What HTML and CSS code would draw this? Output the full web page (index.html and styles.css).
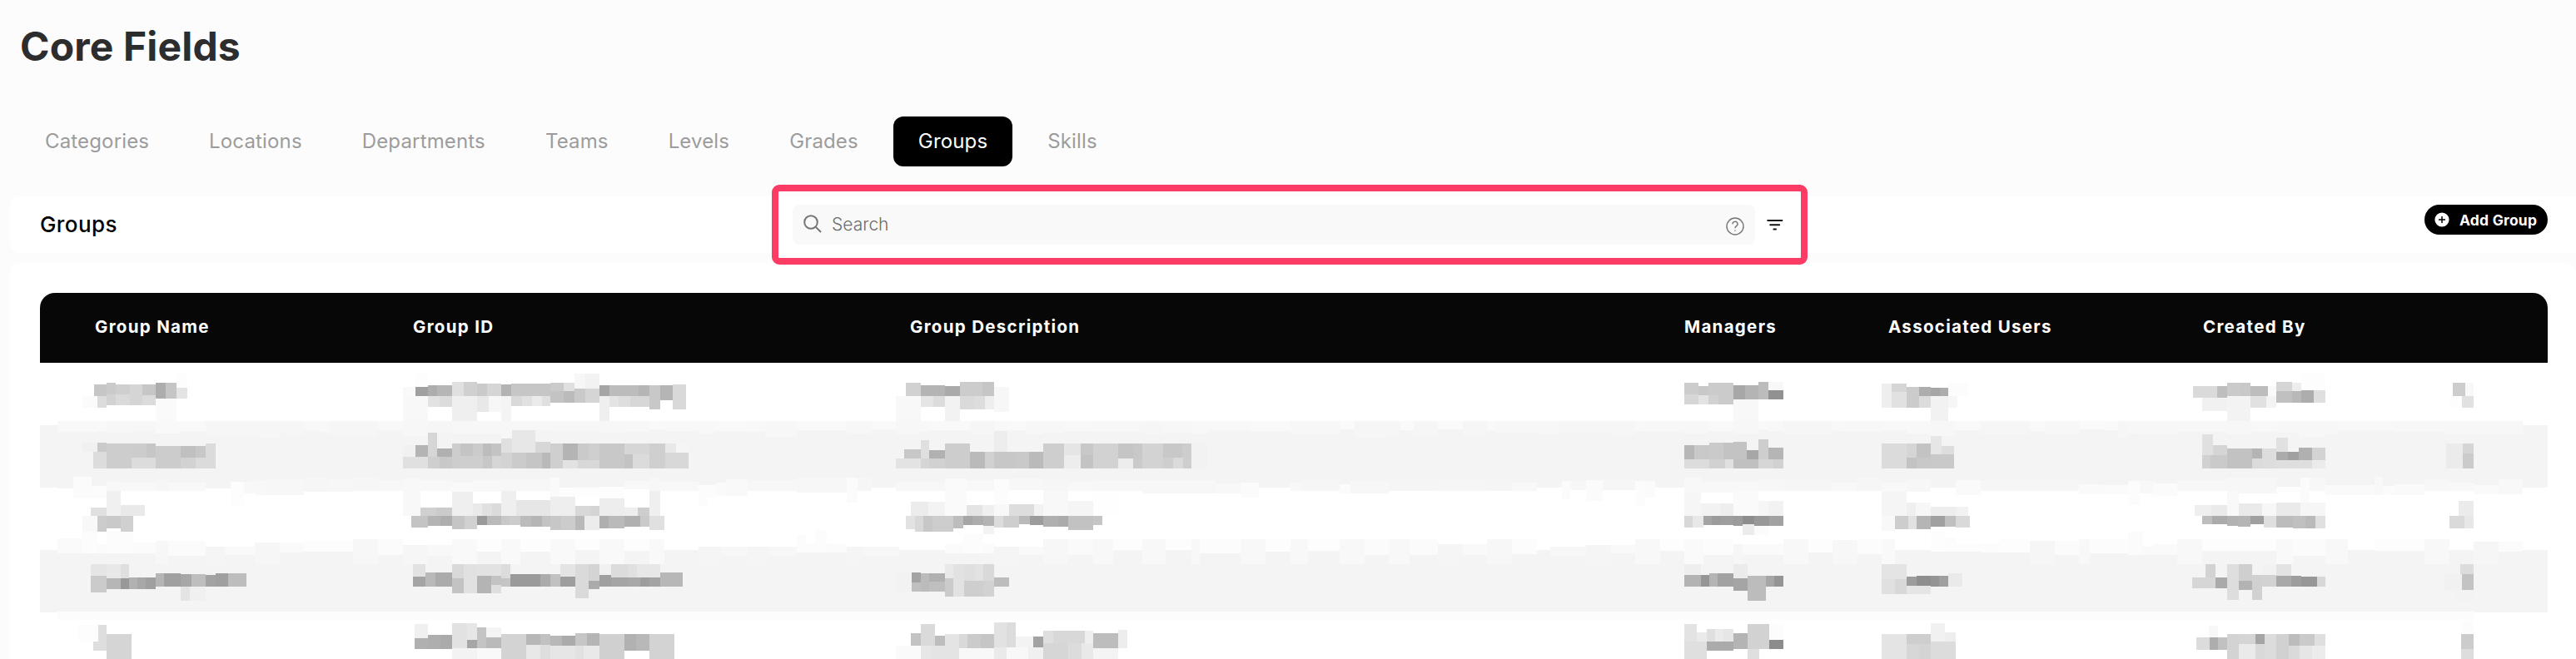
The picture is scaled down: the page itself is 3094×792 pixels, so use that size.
FILE: index.html
```html
<!DOCTYPE html>
<html lang="en">
    <head>
        <meta charset="UTF-8">
        <title>Core Fields - Groups</title>
        <link rel="stylesheet" href="styles.css">
    </head>
    <body>
        <h1>Core Fields</h1>

        <nav class="tabs">
            <a class="tab">Categories</a>
            <a class="tab">Locations</a>
            <a class="tab">Departments</a>
            <a class="tab">Teams</a>
            <a class="tab">Levels</a>
            <a class="tab">Grades</a>
            <a class="tab active">Groups</a>
            <a class="tab">Skills</a>
        </nav>

        <section class="toolbar">
            <h2>Groups</h2>
            <div class="search-area">
                <div class="search">
                    <svg class="search-icon" width="22" height="22" viewBox="0 0 22 22">
                        <circle cx="9" cy="9" r="7.8" />
                        <path d="M14.6 14.6L21 21" />
                    </svg>
                    <span class="search-text">Search</span>
                    <svg class="help-icon" width="22" height="22" viewBox="0 0 22 22">
                        <circle cx="11" cy="11" r="10" />
                        <path d="M8 8.3a3 2.9 0 1 1 4.6 2.3c-1 .7-1.6 1.2-1.6 2.6" />
                        <path d="M11 15.4v1.4" />
                    </svg>
                </div>
                <svg class="filter-icon" width="20" height="14" viewBox="0 0 20 14">
                    <path d="M1.2 2h17.2M4.2 7.3h11M8.4 12.5h2.6" />
                </svg>
            </div>
            <button class="add-group">
                <svg width="18" height="18" viewBox="0 0 18 18">
                    <circle cx="9" cy="9" r="8.6" fill="#fff" />
                    <path d="M9 5v8M5 9h8" stroke="#000" stroke-width="1.5" />
                </svg>
                Add Group
            </button>
        </section>

        <section class="card">
            <div class="grid head">
                <span class="name">Group Name</span>
                <span class="gid">Group ID</span>
                <span class="desc">Group Description</span>
                <span class="managers">Managers</span>
                <span class="users">Associated Users</span>
                <span class="created">Created By</span>
                <span></span>
            </div>
            <div class="body" id="rows">
                <svg class="edges" id="edges" viewBox="0 288 9036 1068" preserveAspectRatio="none"></svg>
            </div>
        </section>

        <script src="script.js"></script>
    </body>
</html>
```
FILE: styles.css
```css
* {
    box-sizing: border-box;
}
html {
    height: 792px;
    overflow: hidden;
}
body {
    margin: 0;
    height: 792px;
    padding-left: 12px;
    overflow: hidden;
    background: #fcfcfc;
    font-family: Inter, "Liberation Sans", sans-serif;
}
h1 {
    margin: 0;
    padding: 26px 0 0 12px;
    height: 140px;
    font-size: 48px;
    line-height: 60px;
    font-weight: 700;
    letter-spacing: 0.15px;
    color: #2d2d2d;
}
.tabs {
    display: flex;
    gap: 12px;
    height: 60px;
    margin-left: 12px;
}
.tab {
    padding: 0 30px;
    line-height: 59px;
    font-size: 24px;
    font-weight: 400;
    letter-spacing: 0.15px;
    color: #9c9c9c;
    border-radius: 12px;
}
.tab.active {
    background: #000;
    color: #fff;
}
.toolbar {
    display: grid;
    grid-template-columns: 879px 1244px 1fr;
    height: 68px;
    margin-top: 36px;
    padding: 0 34px 0 36px;
    background: #fff;
    border-radius: 12px 0 0 12px;
}
h2 {
    margin: 0;
    font-size: 26px;
    line-height: 67px;
    font-weight: 500;
    letter-spacing: 0.4px;
    color: #000;
}
.search-area {
    display: flex;
    align-items: center;
    height: 96px;
    margin-top: -14px;
    padding: 0 21px 0 17px;
    border: 8px solid #fc3c64;
    border-radius: 9px;
}
.search {
    display: flex;
    align-items: center;
    width: 1156px;
    height: 48px;
    padding: 0 13px;
    background: #f9f9f9;
    border-radius: 8px;
}
.search-text {
    flex: 1;
    margin: 0 0 2px 12px;
    font-size: 21px;
    font-weight: 300;
    color: #6c6c6c;
}
.search-icon,
.help-icon,
.filter-icon {
    flex: none;
    fill: none;
    stroke: #757575;
    stroke-width: 2;
}
.search-icon {
    margin-bottom: 2px;
}
.help-icon {
    stroke-width: 1.4;
    margin-top: 3px;
}
.filter-icon {
    margin-left: 14px;
    margin-bottom: 1px;
    stroke: #111;
    stroke-linecap: round;
}
.add-group {
    display: flex;
    align-items: center;
    justify-self: end;
    gap: 12px;
    width: 148px;
    height: 36px;
    margin-top: 10px;
    padding: 0 0 0 12px;
    border: 0;
    border-radius: 18px;
    background: #000;
    color: #fff;
    font-family: inherit;
    font-size: 17.5px;
    font-weight: 700;
    letter-spacing: 0.2px;
    white-space: nowrap;
}
.card {
    height: 476px;
    margin-top: 12px;
    padding: 36px 34px 0 36px;
    overflow: hidden;
    background: #fff;
    border-radius: 12px 12px 0 0;
}
.grid {
    display: grid;
    grid-template-columns: 412px 580px 940px 240px 340px 340px 160px;
}
.head {
    height: 84px;
    line-height: 82px;
    background: #070707;
    color: #fff;
    border-radius: 18px 18px 0 0;
    font-size: 20.5px;
    font-weight: 700;
    letter-spacing: 1.3px;
    white-space: nowrap;
}
.head .name {
    padding-left: 66px;
}
.head .gid {
    padding-left: 36px;
}
.head .desc {
    padding-left: 53px;
}
.head .managers {
    padding-left: 43px;
}
.head .users {
    padding-left: 48px;
}
.head .created {
    padding-left: 86px;
}
.body {
    position: relative;
}
.row {
    height: 75px;
}
.row:nth-of-type(even) {
    background: #f4f4f4;
}
/* softened row borders, drawn over the stripes and under the cell blocks */
.edges {
    position: absolute;
    left: 0;
    top: 0;
    width: 3012px;
    height: 356px;
    filter: brightness(0.996);
}
.cell {
    position: relative;
    width: 100%;
    height: 75px;
    overflow: visible;
    shape-rendering: crispEdges;
}
```
FILE: script.js
```js
const SVG = "http://www.w3.org/2000/svg";

// viewBox start and width of each column
const columns = [
    [144, 1236],
    [0, 1740],
    [0, 2820],
    [0, 720],
    [720, 1020],
    [0, 998.2],
    [998.2, 469.8],
];

// censored cell contents: x1,y1,x2,y2,gray
const rows = [
    [
        "339,366,384,408,c6 384,360,417,402,ca 417,366,468,402,cf 468,366,513,441,d5 513,366,561,405,c6 561,360,597,417,ad 597,360,636,417,c5 636,378,675,417,e4 636,328,675,378,fd 297,408,351,450,fb 351,408,384,450,dc 384,402,417,441,d2 417,402,468,441,da 513,405,561,441,db 561,417,636,498,fa",
        "72,375,117,408,f9 72,408,162,498,f8 117,328,162,375,fd 117,375,162,408,a0 162,369,195,408,ad 195,369,249,408,b6 162,408,204,447,e2 204,408,249,447,dc 249,357,291,408,e0 291,357,339,408,d0 249,408,339,498,ef 339,363,375,408,ca 375,363,426,408,d5 339,408,381,465,e8 381,408,426,465,f7 426,366,462,408,b3 426,408,462,498,f4 462,363,603,408,c6 462,408,501,444,d9 501,408,537,444,e1 537,408,573,444,eb 573,408,603,444,e0 603,360,651,390,cb 651,360,690,390,e0 603,390,651,432,c3 651,390,690,432,bb 690,327,729,381,f7 729,327,780,381,f2 690,381,729,432,c9 729,381,780,432,d5 780,369,816,408,a5 780,408,816,498,ef 816,369,921,408,bc 921,369,960,408,b5 816,408,849,447,e4 849,408,891,447,de 891,408,960,447,d7 960,369,999,456,c8 999,369,1044,423,b5 1044,366,1092,456,d9",
        "144,360,198,408,d1 198,369,285,408,b4 285,372,339,408,aa 339,357,420,408,cc 420,357,462,408,c6 108,408,198,498,f8 198,408,243,447,e5 243,408,285,447,dc 285,408,339,498,f2 339,408,390,456,da 390,408,429,456,dd 429,408,462,456,ee 462,375,516,465,f7",
        "129,360,180,402,cc 180,372,216,405,c8 216,360,306,405,cb 129,402,180,438,d6 180,405,216,438,e3 216,405,252,438,d1 252,400,306,438,cb 306,369,348,420,a7 348,369,396,420,b4 396,357,432,420,bc 432,357,486,387,f8 432,387,486,420,91 306,420,396,498,f8",
        "840,363,876,450,ee 876,363,930,393,d6 876,393,930,450,e1 930,375,975,450,cb 975,375,1017,408,ad 975,408,1017,450,dc 1017,378,1050,408,a5 1050,378,1080,408,ad 1017,408,1080,498,f2 1080,360,1152,408,fc 1080,408,1113,450,f6",
        "217,372,302,414,da 302,372,338,414,be 338,360,385,408,ca 385,360,420,408,c8 420,372,482,408,bd 482,372,511,408,f9 250,414,338,462,f1 338,408,420,498,f3 420,408,476,450,e1 476,408,511,450,f3 511,357,567,390,d5 567,360,599,390,ed 511,390,567,432,c0 567,390,599,432,b8 599,387,643,432,ad 643,387,684,432,df 599,328,684,387,fd",
        "1133,360,1177,408,cd 1177,360,1207,408,f8 1122,408,1166,450,fd 1166,408,1207,450,e1",
    ],
    [
        "297,576,351,609,f0 351,576,384,609,ca 336,609,384,669,dc 384,579,474,669,cd 474,579,528,630,cc 528,579,561,630,c6 474,630,561,669,dc 561,588,651,669,cc 651,588,705,630,c0 705,588,741,630,c7 651,630,705,669,d2 705,630,741,669,db 741,579,777,669,db",
        "72,585,117,627,f1 117,585,162,627,b4 72,627,162,669,e0 162,540,195,627,d6 195,597,249,627,b0 162,627,204,669,cf 204,627,249,669,c8 249,579,279,669,cd 279,579,324,624,c4 324,579,360,624,cb 360,579,390,624,bc 390,579,426,624,c3 279,624,360,669,ce 360,624,393,669,c7 393,624,426,669,d6 426,561,465,612,e0 426,612,465,669,d3 465,531,549,612,e7 549,573,603,612,d7 465,612,516,669,cb 516,612,573,669,c5 573,612,603,669,b9 603,579,648,669,cf 648,579,702,639,b4 702,579,740,639,ca 740,579,780,639,cf 648,639,702,669,e2 702,639,780,669,d8 780,579,870,669,c8 870,579,960,618,d6 870,618,900,669,c3 900,618,960,669,db 960,579,1017,669,cf 1017,579,1056,612,e8 1056,579,1101,612,f5 1017,612,1101,669,d8",
        "138,600,198,633,c7 108,633,198,669,e3 198,567,228,633,df 228,603,285,633,b1 198,633,228,669,d5 228,633,285,669,d1 285,579,375,669,cd 375,609,429,669,ba 429,609,462,669,d1 462,534,510,609,ed 462,609,540,669,c7 540,609,588,669,c9 588,609,639,669,ba 639,579,714,669,ce 714,579,774,621,e5 714,621,774,669,ed 774,579,819,621,c8 774,621,819,669,c3 819,579,909,669,d2 909,579,963,633,c5 963,579,996,633,c8 909,633,963,669,ed 963,633,996,669,ca 996,579,1071,669,d3 1071,579,1140,630,c8 1140,579,1173,630,cd 1071,630,1107,669,ce 1107,630,1143,669,da 1143,630,1173,669,ce 1173,579,1233,669,f2",
        "129,585,165,636,b7 165,585,219,636,c9 219,576,270,636,ca 270,576,306,636,c3 129,636,219,669,dc 219,636,276,669,d1 276,636,306,669,e0 306,573,354,636,c3 354,603,396,636,a7 306,636,396,669,c0 396,564,432,636,ce 432,594,486,636,b5 396,636,450,669,d6 450,636,486,669,d1",
        "840,579,930,669,db 930,579,966,630,d5 966,579,1017,630,c3 930,630,966,669,c3 966,630,1017,669,c8 1017,552,1056,618,e6 1056,588,1101,618,dd 1017,618,1101,669,c9",
        "250,546,288,621,e0 288,585,338,621,d5 250,621,279,669,d1 279,621,338,669,ca 338,597,426,669,c2 426,597,461,633,b4 461,597,511,640,dd 426,633,461,669,db 461,640,511,669,dd 511,558,552,609,e1 511,609,552,639,ab 552,609,590,639,a0 590,594,637,639,b0 637,594,684,639,d3 511,639,637,669,de 637,639,684,669,eb",
        "1110,579,1169,669,eb 1169,579,1207,615,d5 1169,615,1207,669,cb",
    ],
    [
        "264,699,330,777,fb 384,750,435,840,f0 327,810,384,840,e0 435,801,522,840,e9 297,840,351,897,f8 351,840,384,897,cc 384,840,435,885,c9 435,840,480,897,d0 831,717,879,807,fd",
        "72,705,135,840,f8 135,810,192,840,d0 192,810,249,840,cb 102,840,162,882,c4 162,840,207,876,b4 207,840,249,876,ae 249,753,324,840,ef 249,840,294,888,c5 294,840,339,888,d1 324,795,357,840,ea 357,795,393,840,e1 393,795,426,840,db 339,840,375,873,9a 375,840,426,873,ba 426,750,480,840,ef 480,783,603,840,e6 426,840,456,873,c8 456,840,495,873,cc 495,840,534,879,bb 534,840,573,879,b5 573,840,603,879,c3 603,771,693,840,ee 603,840,642,891,c7 642,840,693,891,cc 693,804,747,840,d8 747,804,780,840,d4 693,840,726,891,b9 726,840,780,891,ec 780,777,870,840,ed 780,840,813,885,af 813,840,870,885,ba 870,810,918,840,ee 918,810,960,840,ce 870,840,927,879,b0 927,840,960,879,ca 960,750,999,840,ef 960,840,1014,891,e0",
        "285,705,363,840,fa 162,789,225,840,ec 225,789,285,840,f3 363,801,420,840,e4 420,801,462,840,ef 462,708,516,798,fc 462,798,516,840,f8 516,798,606,840,dd 606,798,639,840,f2 639,750,729,840,f8 729,786,819,840,f5 819,750,909,840,fe 144,840,177,888,e2 177,840,207,897,d8 207,840,240,897,c7 240,840,315,897,cd 315,840,351,885,bd 351,840,384,873,a6 384,840,423,873,ad 423,840,462,876,b4 423,876,462,906,f3 462,840,495,882,dc 495,840,552,882,ce 552,840,591,870,b9 591,840,639,873,9c 639,840,693,879,af 693,840,729,879,ab 729,840,819,891,c2 819,840,852,873,c5",
        "129,756,189,840,f6 189,795,258,840,f2 258,795,306,840,ee 306,750,396,840,fa 396,786,432,840,f6 432,786,486,840,f2 129,840,159,882,d8 159,840,198,882,e8 198,840,228,873,a4 228,840,260,873,9b 260,840,306,873,9e 306,840,339,876,9b 339,840,381,870,8d 381,840,435,876,98 435,840,486,876,a2 339,870,381,909,ec 381,876,435,909,fb",
        "840,753,930,840,f5 930,792,963,840,ef 963,792,1017,840,f7 1017,807,1107,840,ee 1107,807,1152,840,f2 840,840,888,894,f8 888,840,936,888,cd 936,840,966,888,e1 966,840,1017,888,b5 1017,840,1068,879,a0 1068,840,1107,879,c0 1107,840,1158,882,d9",
        "223,801,281,840,ef 281,801,338,840,ea 338,750,379,840,f9 379,795,461,840,ea 461,795,511,840,f7 511,792,596,840,ea 596,792,684,840,f6 250,840,285,870,bd 285,840,338,870,ab 338,840,376,876,b2 376,840,420,879,b5 420,840,467,870,9f 467,840,511,882,df 511,840,570,882,bc 570,840,614,885,c0 614,840,649,885,ba 649,840,684,885,e0",
        "1154,786,1207,840,eb 1122,840,1174,885,da 1174,840,1207,885,e7",
    ],
    [
        "327,1014,384,1056,e5 384,1014,435,1065,e8 435,1014,465,1065,df 327,1056,384,1116,cb 384,1065,435,1104,b6 435,1065,465,1104,98 465,1062,495,1104,b1 495,1062,525,1104,a8 525,1062,561,1104,a0 561,1047,591,1095,b5 591,1047,651,1095,a0 651,1050,690,1095,a7 690,1050,741,1095,be 741,1053,777,1095,a3 777,1047,822,1095,9f 822,1047,888,1095,bd 651,1095,684,1146,e4 684,1095,741,1146,f0",
        "108,1014,153,1059,e2 108,1059,153,1095,a4 153,1044,189,1095,b9 189,1044,249,1095,ab 249,1014,291,1065,d9 249,1065,291,1119,c3 291,1014,339,1119,e1 339,1014,426,1056,e2 339,1056,390,1119,b4 390,1056,426,1089,c3 390,1089,426,1119,de 426,1014,459,1065,dc 426,1065,459,1095,c5 459,1050,567,1095,9a 567,1050,603,1095,ab 603,1050,639,1095,c1 639,1014,693,1059,e4 639,1059,693,1095,9e 693,1014,741,1137,da 741,1014,780,1074,d4 741,1074,780,1104,ab 780,1014,822,1053,f1 780,1053,822,1095,a0 822,1014,882,1062,dc 882,1014,915,1062,e0 915,1014,999,1062,e7 822,1062,882,1095,a5 882,1062,927,1095,a8 927,1062,960,1095,9d 960,1062,999,1095,a4 999,1044,1080,1095,b7",
        "108,1044,165,1113,f2 165,1044,198,1080,a3 198,1047,228,1113,bb 228,1047,285,1077,b0 165,1080,198,1113,bf 228,1077,285,1113,bf 285,1014,315,1065,e9 285,1065,315,1131,cb 315,1014,354,1131,e2 354,1014,393,1074,df 393,1014,423,1074,e2 423,1014,462,1074,d9 354,1074,423,1131,ce 423,1074,462,1131,d2 462,1062,516,1095,bd",
        "129,1014,189,1053,ee 129,1053,189,1095,b3 189,1053,219,1095,96 219,1047,249,1095,b4 249,1047,306,1095,a2 306,1014,357,1065,eb 306,1065,357,1110,a5 357,1056,423,1146,bc 423,1056,453,1095,a6 453,1056,486,1095,95",
        "840,1014,930,1068,e4 840,1068,888,1122,e0 888,1068,930,1122,d8 930,1059,966,1095,9c 966,1056,1017,1095,8e 1017,1056,1047,1095,94 1047,1056,1080,1095,9f 930,1092,1017,1122,e5 1080,1047,1131,1095,ea",
        "261,1014,297,1062,d3 214,1062,297,1101,d6 297,1062,338,1101,aa 338,1014,379,1074,de 379,1014,426,1074,cf 338,1074,379,1143,dd 379,1074,426,1107,b3 426,1053,461,1143,d1 461,1053,511,1095,d2 511,1014,564,1056,e3 461,1014,511,1053,f2 511,1056,564,1095,a9 564,1056,599,1095,9d 599,1059,655,1095,97 655,1059,684,1095,d7",
        "1160,1014,1207,1050,dc 1166,1050,1207,1107,c3 1104,1050,1166,1107,f1 1139,1107,1207,1148,f3",
    ],
    [
        "280,1233,354,1293,fd 354,1233,384,1293,de 336,1293,384,1326,de 384,1266,474,1356,d5",
        "114,1230,162,1281,f0 114,1281,162,1320,b0 162,1269,207,1320,ae 207,1269,249,1320,aa 249,1227,303,1317,e2 303,1227,339,1287,e7 303,1287,339,1317,a6 339,1242,372,1317,c4 372,1242,426,1278,f4 372,1278,426,1317,ba 249,1317,339,1356,f3 339,1317,426,1356,f9 426,1266,516,1356,d3 516,1266,567,1305,b7 567,1266,603,1305,c1 516,1305,567,1356,e8 567,1305,603,1356,de 603,1272,645,1308,b8 645,1272,693,1308,ab 693,1263,735,1308,c6 735,1263,780,1308,b5 603,1308,693,1356,e6 693,1308,723,1356,e1 723,1308,780,1356,e9 780,1266,870,1356,d0 870,1266,912,1326,b1 912,1266,960,1326,b8 960,1266,1050,1356,d3",
        "162,1263,198,1308,c3 198,1230,249,1308,da 249,1272,285,1308,bd 108,1308,198,1356,fa 198,1308,234,1356,e7 234,1308,285,1356,e4 285,1266,336,1356,e4 336,1266,366,1317,d9 366,1266,414,1317,cb 414,1266,462,1317,c6 336,1317,462,1356,f8 462,1224,507,1314,e2 507,1224,540,1314,dc 462,1314,507,1356,ea 507,1314,585,1356,f8 540,1275,603,1314,f3 603,1275,639,1314,a3 585,1314,639,1356,f0 639,1254,675,1299,df 675,1254,789,1299,d8 789,1254,819,1299,ef 639,1299,729,1356,d6 729,1299,777,1356,dc 777,1299,819,1356,e9 819,1263,909,1317,bd 909,1251,942,1317,ed 819,1317,909,1356,f4",
        "129,1230,174,1293,e3 174,1260,210,1293,ea 210,1248,240,1293,df 240,1248,270,1293,ea 270,1248,306,1293,e6 129,1293,210,1356,df 210,1293,306,1326,ab 306,1263,357,1320,b4 357,1230,435,1320,d2 435,1230,486,1287,fc 435,1287,486,1320,8c 357,1320,399,1356,df",
        "840,1266,930,1356,e4 930,1266,1017,1302,ce 930,1302,975,1356,d7 975,1302,1017,1356,d4 1017,1227,1068,1293,f1 1068,1260,1107,1293,ee 1017,1293,1107,1356,dc",
        "273,1236,305,1278,f8 229,1278,276,1323,dc 276,1278,305,1323,ad 305,1278,338,1323,c1 338,1266,379,1356,d3 379,1266,438,1302,d5 438,1266,470,1302,a5 470,1266,511,1356,dc 379,1302,438,1356,ea 438,1302,470,1356,d9 511,1266,555,1356,d1 555,1266,593,1308,bc 593,1266,646,1308,ca 646,1266,684,1308,df 555,1308,593,1356,da 593,1308,637,1356,e6 637,1308,684,1356,ec",
        "1163,1218,1207,1266,fc 1163,1266,1207,1320,cc 1163,1320,1207,1356,dd",
    ],
];

// stripe borders: [left px, x scale, y offset, blocks]
const edges = [
    [0, 3, 0, "207,498,351,538,f9 351,498,384,534,fa 384,498,474,540,f8 474,498,561,534,f8 561,498,651,543,fa 651,498,741,534,fa 741,498,918,548,f7 918,498,1008,558,f7 1008,498,1038,543,f7 1038,498,1095,548,f7 1095,498,1152,531,f9 1152,498,1184,538,f9 1184,498,1272,548,f7 1272,498,1362,556,f7 1362,498,1452,531,f9 207,738,264,741,f4 330,732,384,777,fd 384,717,435,750,f9 435,720,561,750,f9 561,708,606,750,f7 606,720,741,750,f9 741,738,831,741,f4 879,717,918,759,f9 918,711,956,765,f9 956,708,1095,765,f8 1095,702,1184,753,f7 1184,708,1272,753,f8 1272,702,1362,750,f7 1362,711,1452,750,f8 207,921,297,975,fb 297,897,351,975,fd 351,942,384,975,fc 384,897,480,975,fd 480,936,561,975,fc 561,930,606,1014,f8 606,930,741,984,fc 741,951,810,1014,f6 810,951,918,981,fa 918,936,1008,1014,f7 1008,936,1095,972,fb 1095,930,1272,969,fd 1272,924,1362,1014,f8 1362,924,1452,981,fc"],
    [460, 3, 0, "72,498,162,552,f8 162,498,249,540,f7 249,498,426,543,f8 426,498,465,561,f8 465,498,603,531,f8 603,498,780,534,f8 780,498,870,540,f8 870,498,960,538,f8 960,498,1017,528,fa 1017,498,1137,534,f9 1137,498,1194,543,f9 1194,498,1314,534,fa 1314,498,1377,537,f9 1377,498,1491,555,f8 135,711,249,750,f9 249,720,324,753,fa 324,711,426,753,f9 426,708,603,750,f8 603,702,636,771,fb 636,741,693,771,fe 693,738,780,771,fe 780,735,870,777,fe 870,714,960,744,f9 960,702,999,750,f8 999,717,1137,750,f9 1137,729,1170,804,fd 1170,729,1200,774,fd 1200,720,1236,768,fb 1236,708,1314,768,fa 1314,711,1491,750,f8 72,945,162,1014,f7 162,945,249,984,f9 249,924,339,1014,fa 339,924,426,969,fe 426,924,495,1014,fa 495,924,603,969,fe 603,924,693,1014,fa 693,924,780,963,fe 780,924,870,1014,fa 870,924,960,966,fe 960,924,1014,1014,fa 1137,951,1218,1014,f6 1218,951,1314,984,f8 1314,951,1389,1014,f6 1389,951,1491,984,f8"],
    [920, 3, 450, "111,48,291,82,fa 291,48,381,94,f8 111,252,291,306,f8 291,252,330,342,fc 330,252,381,300,f7 111,460,144,522,fd 144,489,176,522,fd 176,440,219,522,fd 219,489,291,522,fc 291,501,351,564,f6 351,501,480,534,f8"],
    [1040, 3, 0, "21,498,108,528,fa 108,498,198,546,f8 198,498,228,537,f9 228,498,375,531,fa 375,498,462,547,f7 462,498,510,534,f9 510,498,579,532,fa 579,498,639,546,f8 639,498,714,540,f8 714,498,819,534,f9 819,498,996,537,f8 996,498,1071,546,f7 1071,498,1173,541,f8 1173,498,1233,543,f9 1233,498,1380,531,f9 108,717,285,750,f8 285,705,363,750,f8 363,711,462,750,f9 516,705,639,747,f8 639,708,729,750,f7 729,717,819,750,f9 819,711,996,750,f8 996,711,1263,759,f8 1263,723,1350,759,f9 1350,720,1416,774,fc 285,938,351,975,fc 351,906,423,975,fd 423,938,462,975,fc 462,951,552,1014,f6 552,951,639,981,fa 639,924,729,1014,f8 729,924,819,981,fb 819,924,891,1014,f9 891,924,996,960,fe 996,924,1080,1014,f9 1080,924,1173,954,fe 1173,924,1203,1014,f9 1203,924,1350,975,fd 1350,924,1440,1014,f9"],
    [1500, 3, 450, "0,48,150,84,fa 150,48,327,96,f8 327,48,381,78,fb 381,48,504,108,f7 504,48,546,102,f7 546,48,594,82,fb 594,48,681,103,f7 681,48,771,78,fb 771,48,858,102,f7 858,48,891,84,fa 891,48,1119,90,f8 1038,90,1119,96,f7 1119,48,1305,90,f7 1305,48,1392,99,f7 1392,48,1500,84,f9 0,270,36,324,fc 150,270,189,300,f9 189,255,327,300,f7 327,276,366,309,fc 366,264,504,309,f8 504,252,681,300,f6 681,258,858,300,f7 858,255,948,300,f6 948,270,1038,300,f9 1128,264,1158,330,fc 1158,264,1215,297,f8 1215,261,1275,336,fc 1275,258,1392,297,f7 1392,264,1428,354,fd 1428,264,1464,324,fc 0,474,60,564,f9 60,474,150,519,fe 150,474,213,564,f9 213,474,327,516,fe 327,474,417,564,f9 417,474,504,531,fc 504,474,579,564,f9 579,474,681,531,fc 681,492,771,564,f6 771,492,858,531,fa 858,474,948,564,f8 948,474,1038,528,fd 1086,501,1215,534,f8 1215,495,1305,564,f6 1305,495,1392,525,fa 1392,474,1482,564,f9 1482,474,1500,516,fd"],
    [1980, 3, 0, "0,498,129,538,f8 129,498,219,543,f8 219,498,306,534,fa 306,498,396,543,f8 396,498,432,528,fa 432,498,486,534,f9 486,498,663,546,f7 663,498,714,534,f9 714,498,840,537,f8 840,498,930,532,f9 930,498,1017,543,f9 1017,498,1101,552,f8 1101,498,1197,530,fa 1197,498,1374,546,f7 1374,498,1431,534,fa 1431,498,1500,546,f8 129,702,189,756,f9 189,717,396,756,f9 396,708,486,750,f8 486,705,663,750,f7 663,720,750,750,f9 750,702,840,750,f7 840,720,930,753,f9 930,708,1017,753,f8 1107,711,1197,765,fb 1197,711,1500,750,f7 42,924,129,966,fe 129,924,198,1014,fb 198,924,306,981,fd 306,942,339,1014,f7 339,942,486,981,fb 486,924,576,1014,f9 576,924,663,972,fe 663,927,753,1014,f8 753,924,840,978,fd 840,924,888,1014,fa 1017,888,1068,969,fe 1068,918,1107,969,fd 1107,942,1197,969,fd 1197,938,1266,972,fd 1266,924,1374,972,fe 1374,930,1464,1014,f7 1464,930,1500,981,fc"],
    [2460, 3, 450, "0,48,111,96,f8 111,48,200,78,fb 200,48,252,82,fa 252,48,288,108,f7 288,48,360,94,f8 0,258,111,300,f7 111,276,200,312,fb 200,279,288,312,fc 288,264,330,351,fd 330,264,390,309,f9 24,480,111,531,fc 111,474,150,564,f9 150,474,288,525,fd 288,447,342,531,fc 342,501,390,531,fa"],
    [2560, 2.936, 0, "30,498,161,546,f8 161,498,426,538,f8 338,498,426,546,f8 426,498,511,538,f9 511,498,590,541,f8 590,498,684,555,f8 684,498,728,547,f8 728,498,922,531,f9 922,498,1110,538,f8 1110,498,1380,546,f8 76,723,161,768,fc 161,711,338,750,f8 338,702,511,759,f8 511,735,596,759,fe 596,702,628,792,fc 628,702,684,750,f8 684,729,857,765,fb 857,699,887,765,f9 887,732,928,765,fc 928,726,1034,765,fb 1034,708,1122,750,f8 1122,720,1207,750,f9 1207,729,1295,762,fb 1295,708,1380,762,f9 76,942,161,981,fb 161,924,250,1014,f9 250,924,511,966,fe 511,924,570,1014,fa 570,924,684,984,fc 684,924,763,1014,f9 857,924,1034,966,fe 1034,924,1122,1014,f9 1207,933,1295,1014,f7 1295,933,1380,969,fc"],
];

function addRects(svg, blocks, dx = 0, dy = 0, scale = 1) {
    blocks.split(" ").forEach((block) => {
        const parts = block.split(",");
        const [x1, y1, x2, y2] = parts.slice(0, 4).map(Number);
        const gray = parts[4];
        const rect = document.createElementNS(SVG, "rect");
        rect.setAttribute("x", x1 * scale + dx);
        rect.setAttribute("y", y1 + dy);
        rect.setAttribute("width", (x2 - x1) * scale);
        rect.setAttribute("height", y2 - y1);
        rect.setAttribute("fill", "#" + gray + gray + gray);
        svg.appendChild(rect);
    });
}

const edgeSvg = document.getElementById("edges");
edgeSvg.setAttribute("shape-rendering", "crispEdges");
edges.forEach(([left, scale, dy, blocks]) => {
    addRects(edgeSvg, blocks, (left - 48) * 3, dy, 3 / scale);
});
addRects(edgeSvg, "63,1185,8772,1215,fd");

const body = document.getElementById("rows");
rows.forEach((cells, r) => {
    const row = document.createElement("div");
    row.className = "grid row";
    cells.forEach((blocks, c) => {
        const svg = document.createElementNS(SVG, "svg");
        svg.setAttribute("class", "cell");
        svg.setAttribute("viewBox", `${columns[c][0]} ${288 + r * 225} ${columns[c][1]} 225`);
        svg.setAttribute("preserveAspectRatio", "none");
        addRects(svg, blocks);
        row.appendChild(svg);
    });
    body.appendChild(row);
});
```
